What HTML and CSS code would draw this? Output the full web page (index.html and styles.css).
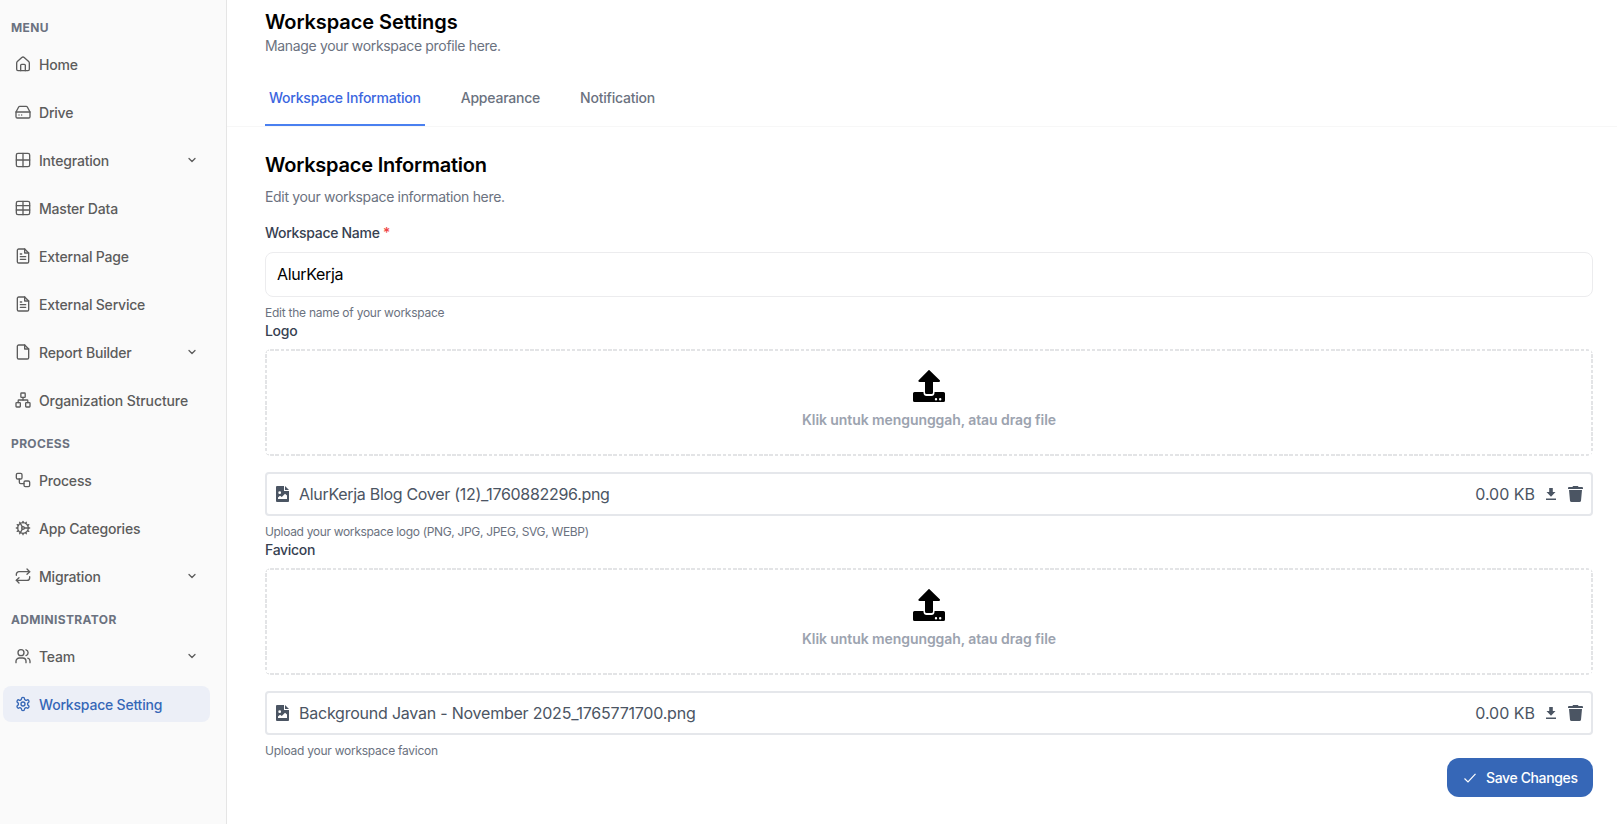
FILE: index.html
```
<!DOCTYPE html>
<html lang="en">
<head>
    <meta charset="UTF-8">
    <meta name="viewport" content="width=device-width, initial-scale=1.0">
    <title>Workspace Settings</title>
    <link rel="stylesheet" href="styles.css">
</head>
<body>

<!-- Shared icons -->
<svg class="icon-defs">
    <symbol id="chevron" viewBox="0 0 24 24"><path d="m6 9 6 6 6-6"/></symbol>
    <symbol id="file-text" viewBox="0 0 24 24"><path d="M14.500 1.500H5.500a2 2 0 0 0-2 2v17a2 2 0 0 0 2 2h13a2 2 0 0 0 2-2V7.500Z"/><path d="M14.500 1.500v6H20.500"/><path d="M8 9h2"/><path d="M8 13h8"/><path d="M8 17h8"/></symbol>
    <symbol id="upload" viewBox="0 0 32 32"><path d="M16.200 0 27 10.600Q27.400 12 26 12H20V22.500Q20 24 18.500 24H13.500Q12 24 12 22.500V12H6.500Q5 12 5.400 10.600L15.800 0Z"/><path fill-rule="evenodd" d="M1.500 22H10.500V23Q10.800 26 13.500 26H18.500Q21.200 26 21.500 23V22H30.500Q32 22 32 23.500V30.500Q32 32 30.500 32H1.500Q0 32 0 30.500V23.500Q0 22 1.500 22ZM23 28a1.200 1.200 0 1 0 0 2.400 1.200 1.200 0 0 0 0-2.400ZM27.200 28a1.200 1.200 0 1 0 0 2.400 1.200 1.200 0 0 0 0-2.400Z"/></symbol>
    <symbol id="file-image" viewBox="0 0 13 16"><path fill-rule="evenodd" d="M1 0H8V5H13V15.200Q13 16 12 16H1Q0 16 0 15V1Q0 0 1 0ZM3.700 5.300a1.400 1.400 0 1 0 0 2.800 1.400 1.400 0 0 0 0-2.800ZM2 13H11V9.500L9 7.800 5.800 11 4 9.800 2 11.500Z"/><path d="M9 0 13 4H9Z"/></symbol>
    <symbol id="download" viewBox="0 0 10 12"><path d="M3.200 0H6.800V4H9.500L5 8.800.5 4H3.200ZM0 10.500H10V12H0Z"/></symbol>
    <symbol id="trash" viewBox="0 0 15 16"><path d="M5 0H10L10.500 1H14Q15 1 15 2V3H0V2Q0 1 1 1H4.500ZM1 4H14L13 14.700Q12.800 16 11.500 16H3.500Q2.200 16 2 14.700Z"/></symbol>
</svg>

<div class="layout">

    <aside class="sidebar">
        <h3 class="menu-title">Menu</h3>
        <nav class="menu">
            <a class="menu-item"><svg class="icon" viewBox="0 0 24 24"><path d="M2.500 10.500a3 3 0 0 1 1-2.200l6.700-6a2.800 2.800 0 0 1 3.600 0l6.700 6a3 3 0 0 1 1 2.200V20a2 2 0 0 1-2 2h-15a2 2 0 0 1-2-2Z"/><path d="M8.500 22v-8a1.500 1.500 0 0 1 1.500-1.500h4a1.500 1.500 0 0 1 1.500 1.500v8"/></svg><span>Home</span></a>
            <a class="menu-item"><svg class="icon" viewBox="0 0 24 24"><path d="M1.500 12h21"/><path d="M5.500 4.500 1.500 12v7a2 2 0 0 0 2 2h17a2 2 0 0 0 2-2v-7l-4-7.500a2 2 0 0 0-1.800-1H7.300a2 2 0 0 0-1.800 1z"/><path d="M6 16.500h.01"/><path d="M10 16.500h.01"/></svg><span>Drive</span></a>
            <a class="menu-item"><svg class="icon" viewBox="0 0 24 24"><rect x="2" y="2" width="20" height="20" rx="2.500"/><path d="M2 12h20"/><path d="M12 2v20"/></svg><span>Integration</span><svg class="icon chevron"><use href="#chevron"/></svg></a>
            <a class="menu-item"><svg class="icon" viewBox="0 0 24 24"><rect x="2" y="2" width="20" height="20" rx="2.500"/><path d="M2 8.500h20"/><path d="M2 15h20"/><path d="M12 2v20"/></svg><span>Master Data</span></a>
            <a class="menu-item"><svg class="icon"><use href="#file-text"/></svg><span>External Page</span></a>
            <a class="menu-item"><svg class="icon"><use href="#file-text"/></svg><span>External Service</span></a>
            <a class="menu-item"><svg class="icon" viewBox="0 0 24 24"><path d="M14.500 1.500H5.500a2 2 0 0 0-2 2v17a2 2 0 0 0 2 2h13a2 2 0 0 0 2-2V7.500Z"/><path d="M14.500 1.500v6H20.500"/></svg><span>Report Builder</span><svg class="icon chevron"><use href="#chevron"/></svg></a>
            <a class="menu-item wide"><svg class="icon" viewBox="0 0 24 24"><rect x="16" y="16" width="6.500" height="6.500" rx="1"/><rect x="1.500" y="16" width="6.500" height="6.500" rx="1"/><rect x="8.800" y="1.500" width="6.500" height="6.500" rx="1"/><path d="M4.800 16v-3a1 1 0 0 1 1-1h12.400a1 1 0 0 1 1 1v3"/><path d="M12 12V8"/></svg><span>Organization Structure</span></a>
        </nav>

        <h3 class="menu-title">Process</h3>
        <nav class="menu">
            <a class="menu-item"><svg class="icon" viewBox="0 0 24 24"><rect x="2" y="2" width="8.500" height="8.500" rx="2"/><path d="M6.500 10.500V15.500a2 2 0 0 0 2 2h5"/><rect x="13.500" y="13.500" width="8.500" height="8.500" rx="2"/></svg><span>Process</span></a>
            <a class="menu-item"><svg class="icon" viewBox="0 0 24 24"><circle cx="12" cy="12" r="8"/><circle cx="12" cy="12" r="2"/><path d="M12 2v2"/><path d="M12 22v-2"/><path d="m17 20.660-1-1.730"/><path d="M11 10.270 7 3.340"/><path d="m20.660 17-1.730-1"/><path d="m3.340 7 1.730 1"/><path d="M14 12h8"/><path d="M2 12h2"/><path d="m20.660 7-1.730 1"/><path d="m3.340 17 1.730-1"/><path d="m17 3.340-1 1.730"/><path d="m11 13.730-4 6.930"/></svg><span>App Categories</span></a>
            <a class="menu-item"><svg class="icon" viewBox="0 0 24 24"><path d="m18 1.500 4 4-4 4"/><path d="M2 11v-1.500a4 4 0 0 1 4-4h16"/><path d="m6 22.500-4-4 4-4"/><path d="M22 13v1.500a4 4 0 0 1-4 4H2"/></svg><span>Migration</span><svg class="icon chevron"><use href="#chevron"/></svg></a>
        </nav>

        <h3 class="menu-title">Administrator</h3>
        <nav class="menu">
            <a class="menu-item"><svg class="icon" viewBox="0 0 24 24"><path d="M1.500 22v-2a5 5 0 0 1 5-5h5a5 5 0 0 1 5 5v2"/><circle cx="9" cy="7" r="4.500"/><path d="M22.500 22v-2.500a4.500 4.500 0 0 0-3.300-4.300"/><path d="M16.500 2.700a4.500 4.500 0 0 1 0 8.600"/></svg><span>Team</span><svg class="icon chevron"><use href="#chevron"/></svg></a>
            <a class="menu-item active"><svg class="icon" viewBox="0 0 24 24"><path d="M12.220 2h-.44a2 2 0 0 0-2 2v.18a2 2 0 0 1-1 1.730l-.43.25a2 2 0 0 1-2 0l-.15-.08a2 2 0 0 0-2.730.73l-.22.38a2 2 0 0 0 .73 2.730l.15.1a2 2 0 0 1 1 1.720v.51a2 2 0 0 1-1 1.740l-.15.09a2 2 0 0 0-.73 2.730l.22.38a2 2 0 0 0 2.730.73l.15-.08a2 2 0 0 1 2 0l.43.25a2 2 0 0 1 1 1.730V20a2 2 0 0 0 2 2h.44a2 2 0 0 0 2-2v-.18a2 2 0 0 1 1-1.730l.43-.25a2 2 0 0 1 2 0l.15.08a2 2 0 0 0 2.730-.73l.22-.39a2 2 0 0 0-.73-2.730l-.15-.08a2 2 0 0 1-1-1.740v-.5a2 2 0 0 1 1-1.740l.15-.09a2 2 0 0 0 .73-2.730l-.22-.38a2 2 0 0 0-2.730-.73l-.15.08a2 2 0 0 1-2 0l-.43-.25a2 2 0 0 1-1-1.730V4a2 2 0 0 0-2-2z"/><circle cx="12" cy="12" r="3"/></svg><span>Workspace Setting</span></a>
        </nav>
    </aside>

    <main class="content">
        <header class="page-header">
            <h1>Workspace Settings</h1>
            <p>Manage your workspace profile here.</p>
        </header>

        <div class="tabs">
            <a class="tab active">Workspace Information</a>
            <a class="tab">Appearance</a>
            <a class="tab">Notification</a>
        </div>

        <form class="settings-form">
            <h2>Workspace Information</h2>
            <p class="description">Edit your workspace information here.</p>

            <label class="label name-label" for="workspace-name">Workspace Name <span class="required">*</span></label>
            <input class="input" type="text" id="workspace-name" value="AlurKerja">
            <p class="help">Edit the name of your workspace</p>

            <div class="label">Logo</div>
            <div class="dropzone">
                <svg class="upload-icon"><use href="#upload"/></svg>
                <p>Klik untuk mengunggah, atau drag file</p>
            </div>
            <div class="file">
                <svg class="file-icon"><use href="#file-image"/></svg>
                <span class="file-name">AlurKerja Blog Cover (12)_1760882296.png</span>
                <span class="file-size">0.00 KB</span>
                <svg class="download-icon"><use href="#download"/></svg>
                <svg class="trash-icon"><use href="#trash"/></svg>
            </div>
            <p class="help upload-help">Upload your workspace logo (PNG, JPG, JPEG, SVG, WEBP)</p>

            <div class="label">Favicon</div>
            <div class="dropzone">
                <svg class="upload-icon"><use href="#upload"/></svg>
                <p>Klik untuk mengunggah, atau drag file</p>
            </div>
            <div class="file">
                <svg class="file-icon"><use href="#file-image"/></svg>
                <span class="file-name favicon-name">Background Javan - November 2025_1765771700.png</span>
                <span class="file-size">0.00 KB</span>
                <svg class="download-icon"><use href="#download"/></svg>
                <svg class="trash-icon"><use href="#trash"/></svg>
            </div>
            <p class="help">Upload your workspace favicon</p>

            <button type="button" class="save-button"><svg class="check" viewBox="0 0 12 10"><path d="M.5 5.500 4 9 11.500.8"/></svg>Save Changes</button>
        </form>
    </main>

</div>
</body>
</html>
```
FILE: styles.css
```
* {
    box-sizing: border-box;
}

body {
    margin: 0;
    font-family: Inter, "Liberation Sans", sans-serif;
    font-size: 14px;
    line-height: 20px;
    letter-spacing: -0.3px;
    color: #000;
    background-color: #fff;
    overflow: hidden;
}

h1, h2, h3, p {
    margin: 0;
}

.icon-defs {
    display: none;
}

.layout {
    display: flex;
    height: 100vh;
}

/* Sidebar */
.sidebar {
    width: 227px;
    height: 824px;
    flex-shrink: 0;
    padding: 20px 16px 0 3px;
    background-color: #fafafa;
    border-right: 1px solid #e5e5e5;
}

.menu-title {
    margin: 0 0 10px 8px;
    font-size: 12px;
    line-height: 16px;
    font-weight: 700;
    letter-spacing: 0.35px;
    text-transform: uppercase;
    color: #6b7280;
}

.menu {
    display: flex;
    flex-direction: column;
    gap: 12px;
    margin-bottom: 18px;
}

.menu-item {
    display: flex;
    align-items: center;
    gap: 8px;
    height: 36px;
    padding: 0 12px;
    border-radius: 8px;
    font-weight: 500;
    letter-spacing: -0.2px;
    color: #5c5c5c;
}

.menu-item span {
    padding-top: 1px;
}

.menu-item.wide {
    letter-spacing: -0.11px;
}

.menu-item.active {
    color: #3667b7;
    background-color: #eceff7;
}

.icon {
    width: 16px;
    height: 16px;
    flex-shrink: 0;
    fill: none;
    stroke: currentColor;
    stroke-width: 2;
    stroke-linecap: round;
    stroke-linejoin: round;
}

.chevron {
    width: 12px;
    height: 12px;
    margin-left: auto;
    stroke-width: 2.6;
}

/* Content */
.content {
    flex: 1;
}

.page-header {
    padding: 8px 38px 0;
}

h1, h2 {
    font-size: 20px;
    line-height: 28px;
    font-weight: 600;
    letter-spacing: -0.09px;
}

h2 {
    letter-spacing: -0.22px;
}

.page-header p,
.description {
    color: #6b7280;
    letter-spacing: -0.33px;
}

.tabs {
    display: flex;
    gap: 32px;
    height: 71px;
    padding: 14px 38px 0;
    border-bottom: 1px solid #f7f7f7;
}

.tab {
    padding: 18px 4px 0;
    font-weight: 500;
    letter-spacing: -0.22px;
    color: #6b7280;
    border-bottom: 2px solid transparent;
}

.tab.active {
    color: #3b66e0;
    border-bottom-color: #4a80f0;
}

.settings-form {
    display: flex;
    flex-direction: column;
    padding: 24px 24px 0 38px;
}

.description {
    margin-top: 8px;
}

.label {
    font-weight: 500;
    color: #374151;
}

.name-label {
    margin: 16px 0 9px;
}

.required {
    color: #ef4444;
}

.input {
    height: 45px;
    padding: 0 11px 1px;
    font-family: inherit;
    font-size: 16px;
    letter-spacing: -0.35px;
    color: #000;
    background-color: #fff;
    border: 1px solid #ececee;
    border-radius: 8px;
}

.help {
    margin: 8px 0 0;
    font-size: 12px;
    line-height: 16px;
    letter-spacing: -0.25px;
    color: #6b7280;
}

.upload-help {
    letter-spacing: -0.33px;
}

/* Short dashes, tighter than the native dashed border */
.dropzone {
    display: flex;
    flex-direction: column;
    align-items: center;
    height: 107px;
    margin-top: 8px;
    padding-top: 21px;
    border-radius: 6px;
    background-image:
        repeating-linear-gradient(90deg, #e3e4e6 0 3.6px, transparent 3.6px 5.2px),
        repeating-linear-gradient(90deg, #e3e4e6 0 3.6px, transparent 3.6px 5.2px),
        repeating-linear-gradient(#e3e4e6 0 3.6px, transparent 3.6px 5.2px),
        repeating-linear-gradient(#e3e4e6 0 3.6px, transparent 3.6px 5.2px);
    background-size: 100% 2px, 100% 2px, 2px 100%, 2px 100%;
    background-position: top, bottom, left, right;
    background-repeat: no-repeat;
}

.dropzone p {
    margin-top: 8px;
    font-weight: 600;
    letter-spacing: -0.08px;
    color: #9ca3af;
}

.upload-icon {
    width: 32px;
    height: 32px;
}

.file {
    display: flex;
    align-items: center;
    height: 44px;
    margin-top: 16px;
    padding: 0 8px 0 9px;
    border: 2px solid #e5e7eb;
    border-radius: 4px;
    font-size: 16px;
    line-height: 24px;
    color: #4b5563;
    fill: #4b5563;
}

.file-icon {
    width: 13px;
    height: 16px;
    margin-right: 10px;
}

.file-name {
    flex: 1;
}

.favicon-name {
    letter-spacing: -0.225px;
}

.file-size {
    letter-spacing: 0;
}

.download-icon {
    width: 10px;
    height: 12px;
    margin: 0 12px 0 11px;
}

.trash-icon {
    width: 15px;
    height: 16px;
}

.save-button {
    display: flex;
    align-items: center;
    align-self: flex-end;
    width: 146px;
    height: 39px;
    margin-top: -1px;
    padding: 0 0 0 17px;
    font-family: inherit;
    font-size: 14px;
    font-weight: 500;
    letter-spacing: -0.37px;
    color: #fff;
    background-color: #3667b7;
    border: none;
    border-radius: 12px;
}

.check {
    width: 12px;
    height: 10px;
    margin-right: 10px;
    fill: none;
    stroke: #fff;
    stroke-width: 1.2;
}
```
